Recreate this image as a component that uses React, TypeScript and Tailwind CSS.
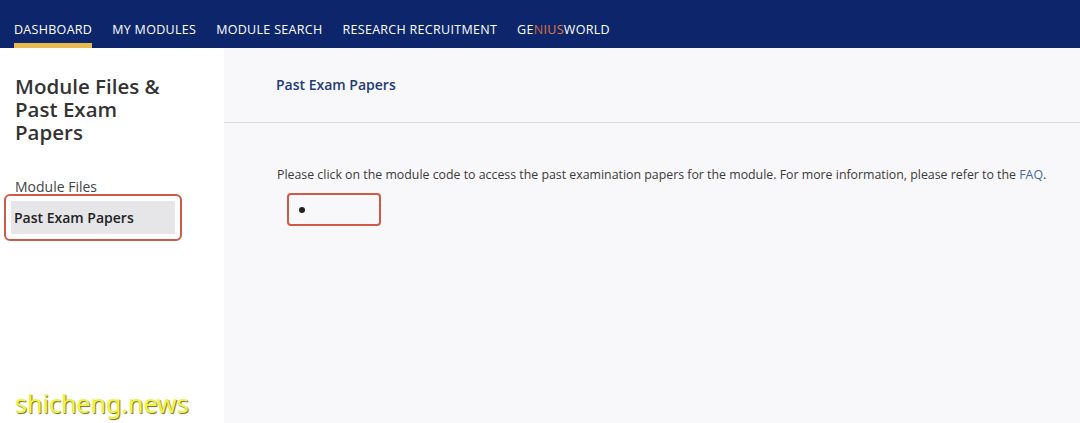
import React from "react";

export default function App() {
  const font = { fontFamily: '"Open Sans", "Noto Sans", sans-serif' };
  return (
    <div className="w-[1080px] h-[423px] overflow-hidden bg-white relative" style={font}>
      <nav className="h-[48px] bg-[#0d266b] flex items-end pl-[14px] gap-[20px]">
        <div className="relative h-full flex items-center pt-[12px]">
          <span className="text-white text-[12.5px] tracking-[0.3px]">DASHBOARD</span>
          <div className="absolute left-0 right-0 bottom-0 h-[5px] bg-[#e8bb50]" />
        </div>
        <div className="h-full flex items-center pt-[12px] text-white text-[12.5px] tracking-[0.3px]">MY MODULES</div>
        <div className="h-full flex items-center pt-[12px] text-white text-[12.5px] tracking-[0.3px]">MODULE SEARCH</div>
        <div className="h-full flex items-center pt-[12px] text-white text-[12.5px] tracking-[0.3px]">RESEARCH RECRUITMENT</div>
        <div className="h-full flex items-center pt-[12px] text-white text-[12.5px] tracking-[0.3px]">
          GE<span className="text-[#c8703f]">N</span><span className="text-[#e7783a]">IUS</span>WORLD
        </div>
      </nav>
      <div className="flex h-[375px]">
        <aside className="w-[224px] bg-white pl-[15px] pt-[27px] relative">
          <h1 className="text-[20.5px] leading-[23px] font-semibold text-[#333333] w-[175px]">
            Module Files &amp; Past Exam Papers
          </h1>
          <div className="mt-[33px] text-[14px] text-[#444] leading-[20px]">Module Files</div>
          <div className="-mt-[3px] -ml-[11px] w-[178px] h-[47px] border-2 border-[#cf5a45] rounded-[6px] p-[5px]">
            <div className="h-full bg-[#e6e6e8] flex items-center pl-[3px] text-[14px] font-semibold text-[#222]">
              Past Exam Papers
            </div>
          </div>
          <div className="absolute left-[15px] bottom-[4px] text-[25px] leading-[32px] text-[#f0f53a] font-['Noto_Sans'] [text-shadow:1px_1px_1px_#6b6b30]">
            shicheng.news
          </div>
        </aside>
        <main className="flex-1 bg-[#f8f7f9]">
          <div className="h-[75px] border-b border-[#dcdbe0] flex items-center pl-[52px] pb-[2px]">
            <span className="text-[14px] font-semibold text-[#233a79]">Past Exam Papers</span>
          </div>
          <div className="pl-[53px] pt-[42px]">
            <p className="text-[12.35px] text-[#3a3a3a] leading-[20px] whitespace-nowrap">
              Please click on the module code to access the past examination papers for the module. For more information, please refer to the{" "}
              <span className="text-[#3f6aa3]">FAQ</span>.
            </p>
            <div className="mt-[8px] ml-[10px] w-[94px] h-[33px] border-2 border-[#cf5a45] rounded-[4px] flex items-center pl-[10px]">
              <div className="w-[6px] h-[6px] rounded-full bg-[#222]" />
            </div>
          </div>
        </main>
      </div>
    </div>
  );
}
